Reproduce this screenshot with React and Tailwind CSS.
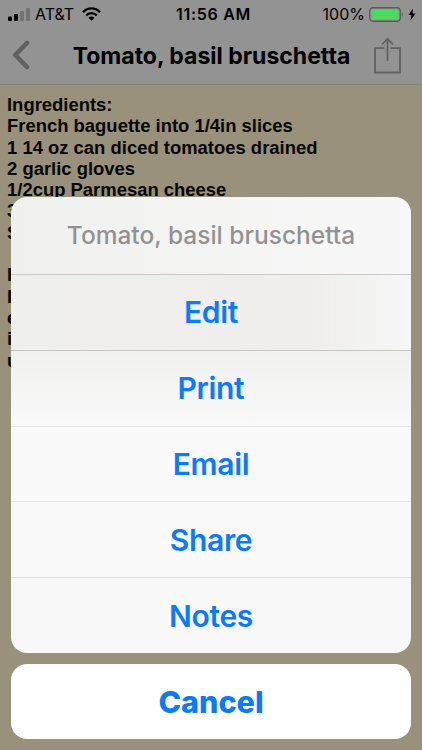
const ingredients = [
  "Ingredients:",
  "French baguette into 1/4in slices",
  "1 14 oz can diced tomatoes drained",
  "2 garlic gloves",
  "1/2cup Parmesan cheese",
  "3",
  "S",
];

const directions = ["I", "I", "e", "i", "u"];

const actions = [
  { label: "Edit", row: "bg-linear-to-r from-[#efefee] from-0% via-[#efeeed] via-75% to-[#f6f6f6] border-[#c9c9c9]" },
  { label: "Print", row: "bg-linear-to-b from-[#f1f1f0] to-[#f9f9f9] border-[#c6c6c5]" },
  { label: "Email", row: "bg-[#f9f9f9] border-[#e6e5e5]" },
  { label: "Share", row: "bg-[#f9f9f9] border-[#e6e6e6]" },
  { label: "Notes", row: "bg-[#f8f8f8] border-[#dedede]" },
];

const StatusBar = () => {
  return (
    <div className="grid grid-cols-3 items-center h-7 pl-2 pr-[6px] text-[16px] leading-7 text-black">
      <div className="flex items-center">
        <svg width="22" height="13" viewBox="0 0 22 13">
          <rect x="0" y="8.5" width="4" height="4.5" rx="1" fill="#000" />
          <rect x="6" y="6" width="4" height="7" rx="1" fill="#000" />
          <rect x="12" y="3" width="4" height="10" rx="1" fill="#737373" />
          <rect x="18" y="0" width="4" height="13" rx="1" fill="#737373" />
        </svg>
        <span className="ml-[5px]">AT&amp;T</span>
        <svg className="ml-2" width="19" height="14" viewBox="0 0 19 14" fill="none" stroke="#000">
          <path d="M1 5.2C5.8 0.2 13.2 0.2 18 5.2" strokeWidth="2.3" />
          <path d="M4.1 8.4C7.2 5.3 11.8 5.3 14.9 8.4" strokeWidth="2.3" />
          <path d="M6.5 10.7C8.2 9.1 10.8 9.1 12.5 10.7L9.5 13.7Z" fill="#000" stroke="none" />
        </svg>
      </div>
      <div className="pl-[3px] text-center font-semibold tracking-[0.7px]">11:56 AM</div>
      <div className="flex items-center justify-end">
        <span>100%</span>
        <svg className="ml-1" width="35" height="15" viewBox="0 0 35 15">
          <rect x="0.75" y="0.75" width="30.5" height="13.5" rx="3.2" fill="none" stroke="#5b5b5b" strokeWidth="1.3" />
          <rect x="2.3" y="2.3" width="27.4" height="10.4" rx="1.8" fill="#4bd863" />
          <path d="M32.8 5.2Q35 7.5 32.8 9.8Z" fill="#5b5b5b" />
        </svg>
        <svg className="ml-1" width="8" height="13" viewBox="0 0 8 13">
          <path d="M5 0.5L0.5 7H3.4L2.5 12.5L7.5 5.5H4.5Z" fill="#000" />
        </svg>
      </div>
    </div>
  );
};

const NavBar = () => {
  return (
    <div className="flex items-center justify-between h-[55px] pl-3 pr-[21px]">
      <svg className="mb-px" width="18" height="30" viewBox="0 0 18 30" fill="none" stroke="#606060" strokeWidth="4.6" strokeLinecap="round" strokeLinejoin="round">
        <path d="M15 3L3.2 15L15 27" />
      </svg>
      <h1 className="ml-[19px] pt-px text-[23px] font-bold whitespace-nowrap text-black">Tomato, basil bruschetta</h1>
      <svg width="27" height="37" viewBox="0 0 27 37" fill="none" stroke="#626262" strokeWidth="1.8">
        <path d="M10.5 11.2H1V35.5H26V11.2H16.5" />
        <path d="M13.5 24V2M8 7.5L13.5 1.8L19 7.5" />
      </svg>
    </div>
  );
};

const ActionSheet = () => {
  return (
    <div className="absolute inset-x-[11px] bottom-[11px] flex flex-col gap-[11px] text-center">
      <div className="overflow-hidden rounded-[16px]">
        <div className="flex items-center justify-center h-[77px] bg-linear-to-r from-[#f0f0ef] to-[#f8f8f8] text-[24.5px] font-medium text-[#929292]">
          <span>Tomato, basil bruschetta</span>
        </div>
        {actions.map((action) => (
          <button
            key={action.label}
            type="button"
            className={`flex items-center justify-center w-full h-[75.8px] pt-px border-t text-[30px] font-semibold tracking-[-0.3px] text-[#0a7aff] ${action.row}`}
          >
            <span>{action.label}</span>
          </button>
        ))}
      </div>
      <button type="button" className="flex items-center justify-center h-[75px] rounded-[16px] bg-white text-[30.5px] font-extrabold text-[#0a7aff]">
        <span>Cancel</span>
      </button>
    </div>
  );
};

const App = () => {
  return (
    <div className="relative w-full h-[750px] overflow-hidden bg-[#99917b] font-['Inter',sans-serif]">
      <header className="h-[85px] bg-[#939393] border-b border-[#857f72]">
        <StatusBar />
        <NavBar />
      </header>
      <main className="px-[7px] pt-[9px] font-['Liberation_Sans',sans-serif] text-[18.45px] leading-[21.3px] font-bold text-[#080705]">
        {ingredients.map((line) => (
          <p key={line}>{line}</p>
        ))}
        <div className="pt-[21.3px]">
          {directions.map((line, i) => (
            <p key={i}>{line}</p>
          ))}
        </div>
      </main>
      <ActionSheet />
    </div>
  );
};

export default App;
